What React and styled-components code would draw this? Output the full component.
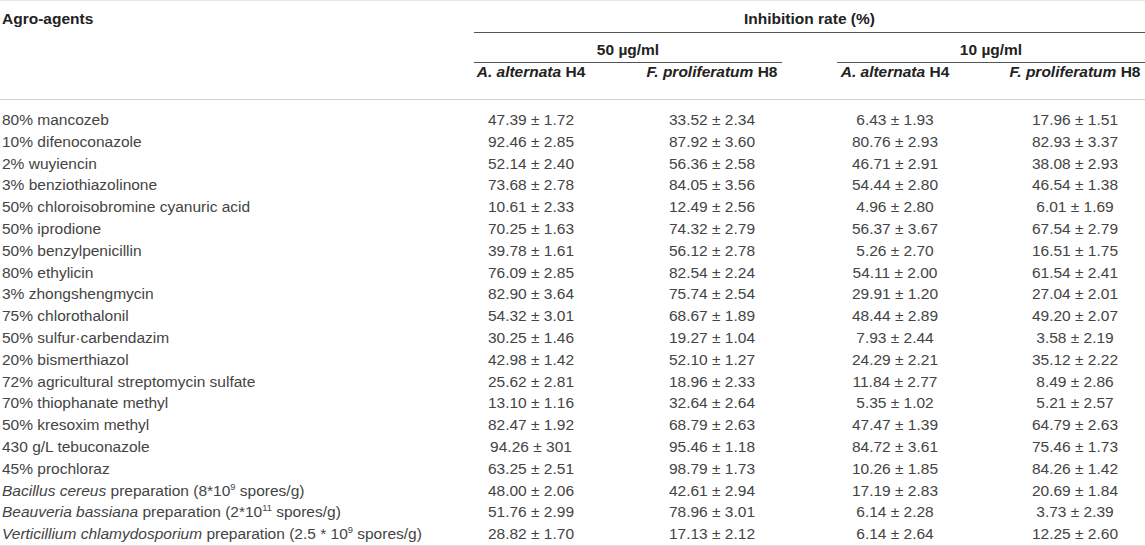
import React from 'react';
import styled, { createGlobalStyle, css } from 'styled-components';

const GlobalStyle = createGlobalStyle`
	html, body {
		margin: 0;
		padding: 0;
		background: #fff;
	}
	body {
		font-family: "Liberation Sans", Arial, sans-serif;
		color: #444;
	}
`;

// agent | c1 | spacer | c2 | spacer | c3 | spacer | c4
const COLUMNS = '474px 114px 54px 140px 55px 116px 52px 140px';

const Table = styled.div`
	width: 1145px;
	border-top: 1px solid #e6e6e6;
	font-size: 15.5px;
`;

const Head = styled.div`
	display: grid;
	grid-template-columns: ${COLUMNS};
	grid-template-rows: 32px 30px 36px;
	border-bottom: 1px solid #cfcfcf;
	font-weight: bold;
	color: #222;
	line-height: 18px;
`;

const HeadCell = styled.div`
	grid-column: ${props => props.col};
	grid-row: ${props => props.row};
	padding-top: ${props => props.pad || 0}px;
	text-align: ${props => props.left ? 'left' : 'center'};
	white-space: nowrap;
	${props => props.left && css`
		padding-left: 2px;
	`}
	${props => props.rule && css`
		border-bottom: 1px solid #555;
		box-sizing: border-box;
	`}
`;

const Body = styled.div`
	padding-top: 9px;
	border-bottom: 1px solid #e2e2e2;
`;

const Row = styled.div`
	display: grid;
	grid-template-columns: ${COLUMNS};
	height: 21.8px;
	line-height: 21.8px;
	white-space: nowrap;
`;

const Agent = styled.div`
	grid-column: 1;
	padding-left: 2px;
`;

const Value = styled.div`
	grid-column: ${props => props.col};
	text-align: center;
`;

const Sup = styled.sup`
	font-size: 0.6em;
	line-height: 0;
	vertical-align: 0.6em;
`;

const rows = [
	['80% mancozeb', '47.39 ± 1.72', '33.52 ± 2.34', '6.43 ± 1.93', '17.96 ± 1.51'],
	['10% difenoconazole', '92.46 ± 2.85', '87.92 ± 3.60', '80.76 ± 2.93', '82.93 ± 3.37'],
	['2% wuyiencin', '52.14 ± 2.40', '56.36 ± 2.58', '46.71 ± 2.91', '38.08 ± 2.93'],
	['3% benziothiazolinone', '73.68 ± 2.78', '84.05 ± 3.56', '54.44 ± 2.80', '46.54 ± 1.38'],
	['50% chloroisobromine cyanuric acid', '10.61 ± 2.33', '12.49 ± 2.56', '4.96 ± 2.80', '6.01 ± 1.69'],
	['50% iprodione', '70.25 ± 1.63', '74.32 ± 2.79', '56.37 ± 3.67', '67.54 ± 2.79'],
	['50% benzylpenicillin', '39.78 ± 1.61', '56.12 ± 2.78', '5.26 ± 2.70', '16.51 ± 1.75'],
	['80% ethylicin', '76.09 ± 2.85', '82.54 ± 2.24', '54.11 ± 2.00', '61.54 ± 2.41'],
	['3% zhongshengmycin', '82.90 ± 3.64', '75.74 ± 2.54', '29.91 ± 1.20', '27.04 ± 2.01'],
	['75% chlorothalonil', '54.32 ± 3.01', '68.67 ± 1.89', '48.44 ± 2.89', '49.20 ± 2.07'],
	['50% sulfur·carbendazim', '30.25 ± 1.46', '19.27 ± 1.04', '7.93 ± 2.44', '3.58 ± 2.19'],
	['20% bismerthiazol', '42.98 ± 1.42', '52.10 ± 1.27', '24.29 ± 2.21', '35.12 ± 2.22'],
	['72% agricultural streptomycin sulfate', '25.62 ± 2.81', '18.96 ± 2.33', '11.84 ± 2.77', '8.49 ± 2.86'],
	['70% thiophanate methyl', '13.10 ± 1.16', '32.64 ± 2.64', '5.35 ± 1.02', '5.21 ± 2.57'],
	['50% kresoxim methyl', '82.47 ± 1.92', '68.79 ± 2.63', '47.47 ± 1.39', '64.79 ± 2.63'],
	['430 g/L tebuconazole', '94.26 ± 301', '95.46 ± 1.18', '84.72 ± 3.61', '75.46 ± 1.73'],
	['45% prochloraz', '63.25 ± 2.51', '98.79 ± 1.73', '10.26 ± 1.85', '84.26 ± 1.42'],
	[<><i>Bacillus cereus</i> preparation (8*10<Sup>9</Sup> spores/g)</>, '48.00 ± 2.06', '42.61 ± 2.94', '17.19 ± 2.83', '20.69 ± 1.84'],
	[<><i>Beauveria bassiana</i> preparation (2*10<Sup>11</Sup> spores/g)</>, '51.76 ± 2.99', '78.96 ± 3.01', '6.14 ± 2.28', '3.73 ± 2.39'],
	[<><i>Verticillium chlamydosporium</i> preparation (2.5 * 10<Sup>9</Sup> spores/g)</>, '28.82 ± 1.70', '17.13 ± 2.12', '6.14 ± 2.64', '12.25 ± 2.60'],
];

const valueCols = [2, 4, 6, 8];

const Species = ({ name, strain }) => (
	<><i>{name}</i> {strain}</>
);

export default function App() {
	return (
		<>
			<GlobalStyle />
			<Table>
				<Head>
					<HeadCell col="1" row="1" pad={9} left>Agro-agents</HeadCell>
					<HeadCell col="2 / 9" row="1" pad={9} rule>Inhibition rate (%)</HeadCell>
					<HeadCell col="2 / 5" row="2" pad={8} rule>50 µg/ml</HeadCell>
					<HeadCell col="6 / 9" row="2" pad={8} rule>10 µg/ml</HeadCell>
					<HeadCell col="2" row="3"><Species name="A. alternata" strain="H4" /></HeadCell>
					<HeadCell col="4" row="3"><Species name="F. proliferatum" strain="H8" /></HeadCell>
					<HeadCell col="6" row="3"><Species name="A. alternata" strain="H4" /></HeadCell>
					<HeadCell col="8" row="3"><Species name="F. proliferatum" strain="H8" /></HeadCell>
				</Head>
				<Body>
					{rows.map((r, i) => (
						<Row key={i}>
							<Agent>{r[0]}</Agent>
							{r.slice(1).map((v, j) => (
								<Value key={j} col={valueCols[j]}>{v}</Value>
							))}
						</Row>
					))}
				</Body>
			</Table>
		</>
	);
}
